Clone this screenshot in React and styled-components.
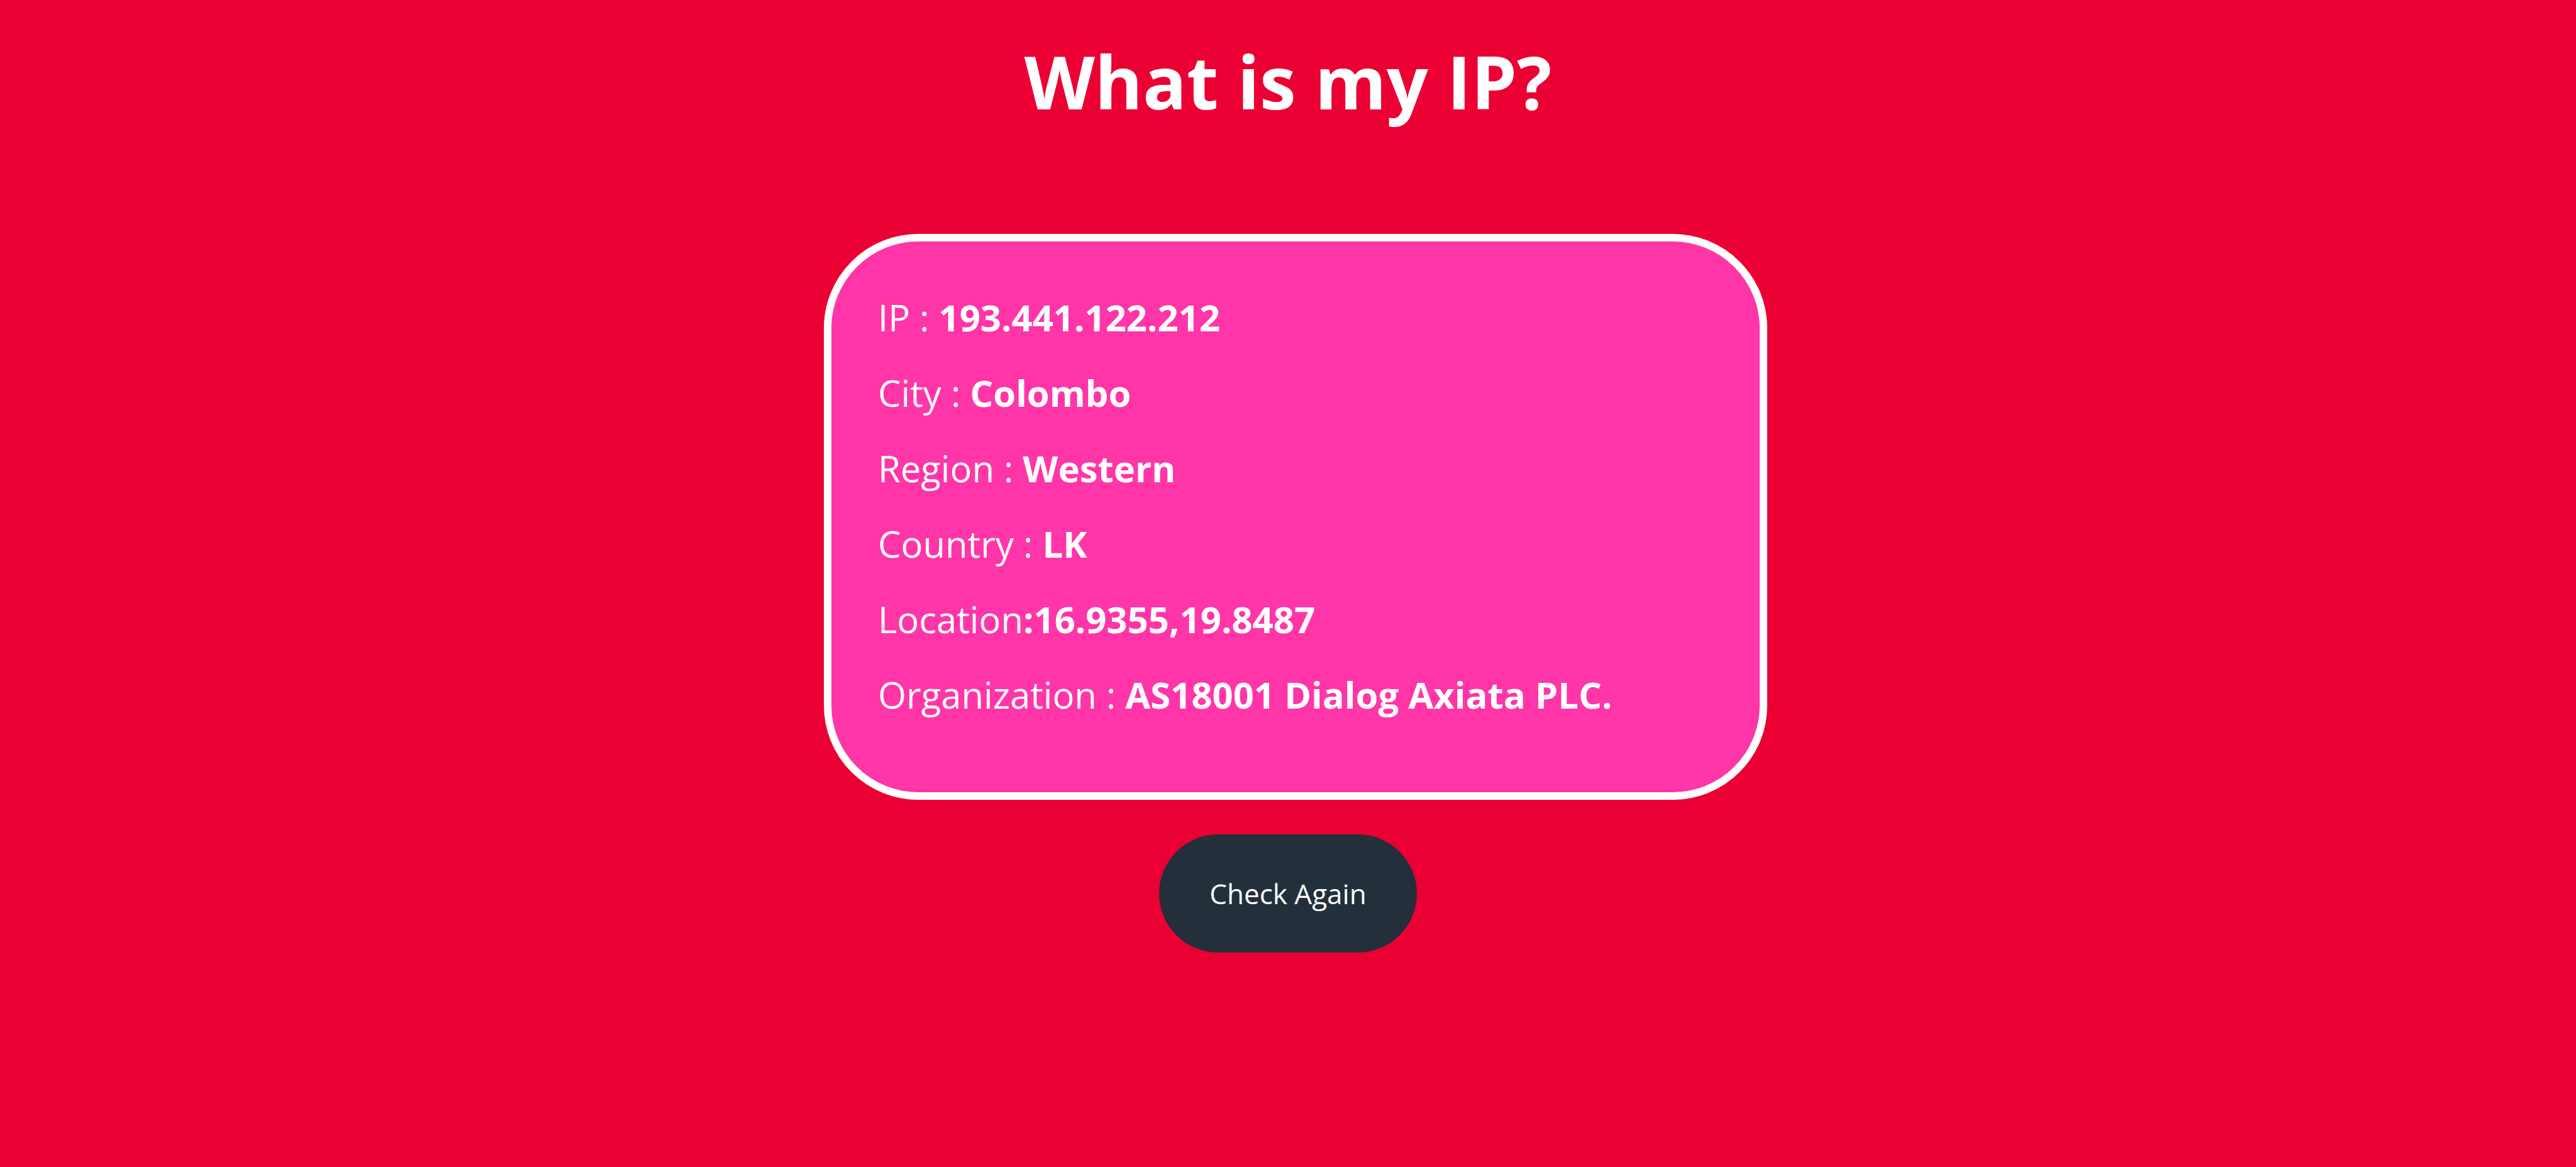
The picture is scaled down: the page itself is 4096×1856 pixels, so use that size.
import React from "react";
import styled, { createGlobalStyle } from "styled-components";

const Global = createGlobalStyle`
  body { margin: 0; background: #eb0034; font-family: "Open Sans", "Noto Sans", sans-serif; color: #fff; }
`;
const Page = styled.main`
  display: flex; flex-direction: column; align-items: center;
  min-height: 100vh; box-sizing: border-box; padding-top: 49px;
`;
const Title = styled.h1`
  margin: 0; font-size: 116px; line-height: 160px; font-weight: 700;
`;
const Card = styled.section`
  box-sizing: border-box; width: 1500px; max-width: 100%; margin-top: 163px; margin-left: 24px;
  padding: 61px 74px 95px; border: 12px solid #fff; border-radius: 150px; background: #ff35a8;
`;
const Row = styled.p`
  margin: 0; font-size: 58px; line-height: 120px;
`;
const Button = styled.button`
  margin-top: 55px; padding: 64px 80px; border: 0; border-radius: 94px;
  background: #232f3b; color: #fff; font: 400 44px/60px "Open Sans", "Noto Sans", sans-serif;
`;
const details = [
  ["IP : ", "193.441.122.212"],
  ["City : ", "Colombo"],
  ["Region : ", "Western"],
  ["Country : ", "LK"],
  ["Location", ":16.9355,19.8487"],
  ["Organization : ", "AS18001 Dialog Axiata PLC."],
];
export default function App() {
  return (
    <Page>
      <Global />
      <Title>What is my IP?</Title>
      <Card>
        {details.map(([label, value]) => (
          <Row key={label}>{label}<b>{value}</b></Row>
        ))}
      </Card>
      <Button type="button">Check Again</Button>
    </Page>
  );
}
